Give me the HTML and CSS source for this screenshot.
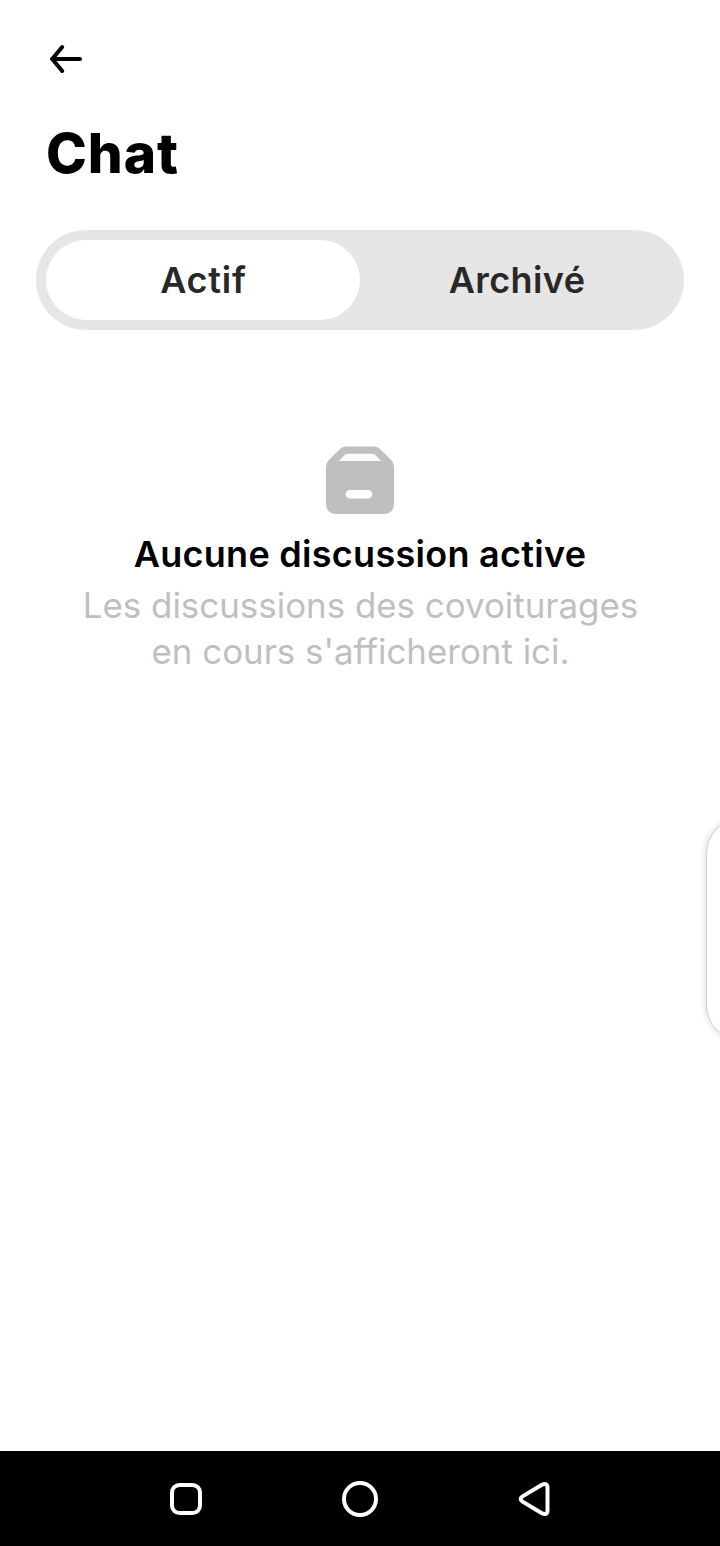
FILE: index.html
```html
<!DOCTYPE html>
<html lang="fr">
<head>
<meta charset="utf-8">
<title>Chat</title>
<link rel="stylesheet" href="styles.css">
</head>
<body>
<div class="screen">
  <main class="content">
    <button class="back" aria-label="Retour">
      <svg width="36" height="32" viewBox="0 0 36 32" fill="none" stroke="#000" stroke-width="4" stroke-linecap="round" stroke-linejoin="round"><path d="M32 16H4M14.2 4 4.2 16l10 12"/></svg>
    </button>
    <h1 class="title">Chat</h1>
    <nav class="tabs">
      <button class="tab tab-active">Actif</button>
      <button class="tab">Archivé</button>
    </nav>
    <section class="empty">
      <svg class="empty-icon" width="68" height="68" viewBox="0 0 68 68"><path fill="#bfbfbf" fill-rule="evenodd" d="M21 0.500H47Q51.500 0.500 54.500 3.500L65 13.800Q68 16.800 68 21V57Q68 68 57 68H11Q0 68 0 57V21Q0 16.800 3 13.800L13.500 3.500Q16.500 0.500 21 0.500ZM22 7.700Q20 7.700 18.500 9.200L13 15H55L49.500 9.200Q48 7.700 46 7.700ZM23.800 44a4.200 4.200 0 0 0 0 8.400H42.200a4.200 4.200 0 0 0 0-8.400Z"/></svg>
      <h2 class="empty-title">Aucune discussion active</h2>
      <p class="empty-text">Les discussions des covoiturages<br>en cours s'afficheront ici.</p>
    </section>
  </main>
  <div class="edge-handle"></div>
  <footer class="navbar">
    <svg width="36" height="36" viewBox="0 0 36 36"><rect x="4" y="4" width="28" height="28" rx="7.500"/></svg>
    <svg width="36" height="36" viewBox="0 0 36 36"><circle cx="18" cy="18" r="16"/></svg>
    <svg width="36" height="36" viewBox="0 0 36 36"><path d="M6.500 15.400 25.500 4Q31 1.200 31.500 6V30Q31 34.800 25.500 32L6.500 20.600Q2.800 18 6.500 15.400Z"/></svg>
  </footer>
</div>
</body>
</html>
```
FILE: styles.css
```css
* { box-sizing: border-box; }
body {
  margin: 0;
  background: #fff;
  font-family: Inter, "Liberation Sans", sans-serif;
}
.screen {
  position: relative;
  display: flex;
  flex-direction: column;
  width: 720px;
  height: 1546px;
  overflow: hidden;
}
.content {
  flex: 1;
  display: flex;
  flex-direction: column;
  padding: 43px 36px 0;
}
button {
  border: 0;
  padding: 0;
  background: none;
  font: inherit;
  color: inherit;
}
.back { width: 36px; height: 32px; margin-left: 12px; }
.back svg { display: block; }
.title {
  margin: 48px 0 0 10px;
  font-size: 55px;
  line-height: 60px;
  font-weight: 800;
  letter-spacing: 0.9px;
}
.tabs {
  display: grid;
  grid-template-columns: 1fr 1fr;
  height: 100px;
  margin-top: 47px;
  padding: 10px;
  border-radius: 50px;
  background: #e6e6e6;
}
.tab {
  border-radius: 40px;
  font-size: 36px;
  line-height: 80px;
  font-weight: 600;
  letter-spacing: 0.4px;
  color: #282828;
}
.tab-active {
  padding-left: 1px;
  background: #fff;
  letter-spacing: 0.8px;
}
.empty {
  display: flex;
  flex-direction: column;
  align-items: center;
  padding-top: 116px;
  text-align: center;
  white-space: nowrap;
}
.empty-icon { display: block; }
.empty-title {
  margin: 17px 0 0;
  font-size: 36px;
  line-height: 46px;
  font-weight: 600;
  letter-spacing: 0.28px;
}
.empty-text {
  margin: 5px 0 0;
  padding-left: 1px;
  font-size: 34.900px;
  line-height: 46px;
  color: #bfbfbf;
}
.edge-handle {
  position: absolute;
  top: 818px;
  left: 706px;
  width: 80px;
  height: 223px;
  border: 1px solid #d2d2d2;
  border-radius: 36px;
  background: #fff;
  box-shadow: 0 0 7px rgba(0, 0, 0, 0.18);
}
.navbar {
  display: flex;
  justify-content: center;
  gap: 138px;
  height: 95px;
  padding-top: 30px;
  background: #000;
}
.navbar svg { fill: none; stroke: #fff; stroke-width: 4; stroke-linejoin: round; }
```
